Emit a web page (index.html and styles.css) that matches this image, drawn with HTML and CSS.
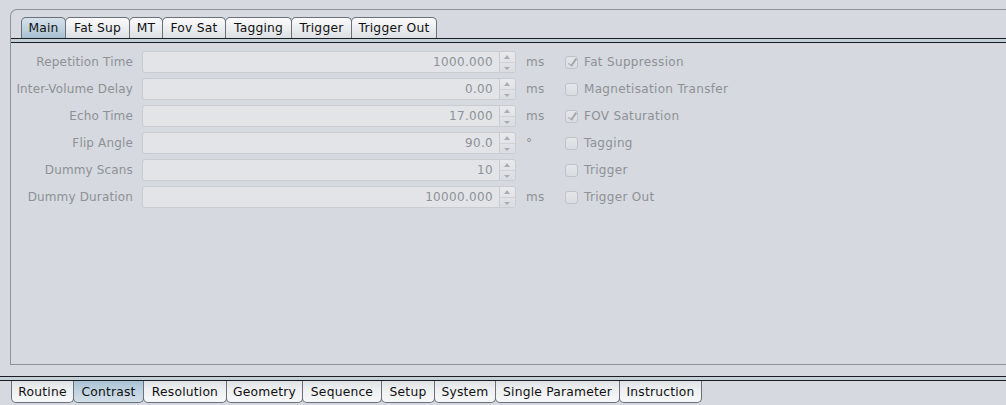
FILE: index.html
```html
<!DOCTYPE html>
<html>
<head>
<meta charset="utf-8">
<link rel="stylesheet" href="styles.css">
</head>
<body>
<div class="app">
  <div class="outer">
    <div class="tabstrip">
      <div class="tab sel w45">Main</div>
      <div class="tab w65">Fat Sup</div>
      <div class="tab w34">MT</div>
      <div class="tab w64">Fov Sat</div>
      <div class="tab w67">Tagging</div>
      <div class="tab w61">Trigger</div>
      <div class="tab w86">Trigger Out</div>
    </div>
    <div class="tabline"></div>
    <div class="content">
      <div class="grid">
        <div class="row">
          <span class="lbl">Repetition Time</span>
          <div class="spin"><div class="val">1000.000</div><div class="btns"><span class="up"></span><span class="dn"></span></div></div>
          <span class="unit">ms</span>
          <label class="cb"><span class="box checked"></span>Fat Suppression</label>
        </div>
        <div class="row">
          <span class="lbl">Inter-Volume Delay</span>
          <div class="spin"><div class="val">0.00</div><div class="btns"><span class="up"></span><span class="dn"></span></div></div>
          <span class="unit">ms</span>
          <label class="cb"><span class="box"></span>Magnetisation Transfer</label>
        </div>
        <div class="row">
          <span class="lbl">Echo Time</span>
          <div class="spin"><div class="val">17.000</div><div class="btns"><span class="up"></span><span class="dn"></span></div></div>
          <span class="unit">ms</span>
          <label class="cb"><span class="box checked"></span>FOV Saturation</label>
        </div>
        <div class="row">
          <span class="lbl">Flip Angle</span>
          <div class="spin"><div class="val">90.0</div><div class="btns"><span class="up"></span><span class="dn"></span></div></div>
          <span class="unit">°</span>
          <label class="cb"><span class="box"></span>Tagging</label>
        </div>
        <div class="row">
          <span class="lbl">Dummy Scans</span>
          <div class="spin"><div class="val">10</div><div class="btns"><span class="up"></span><span class="dn"></span></div></div>
          <span class="unit"></span>
          <label class="cb"><span class="box"></span>Trigger</label>
        </div>
        <div class="row">
          <span class="lbl">Dummy Duration</span>
          <div class="spin"><div class="val">10000.000</div><div class="btns"><span class="up"></span><span class="dn"></span></div></div>
          <span class="unit">ms</span>
          <label class="cb"><span class="box"></span>Trigger Out</label>
        </div>
      </div>
    </div>
  </div>
  <div class="bottom">
    <div class="tabline"></div>
    <div class="btabs">
      <div class="btab w63">Routine</div>
      <div class="btab sel w71">Contrast</div>
      <div class="btab w84">Resolution</div>
      <div class="btab w77">Geometry</div>
      <div class="btab w80">Sequence</div>
      <div class="btab w54">Setup</div>
      <div class="btab w62">System</div>
      <div class="btab w125">Single Parameter</div>
      <div class="btab w83">Instruction</div>
    </div>
  </div>
</div>
</body>
</html>
```
FILE: styles.css
```css
html, body {
  margin: 0;
  padding: 0;
  background: #d6d9df;
  font-family: "DejaVu Sans", "Liberation Sans", sans-serif;
  font-size: 12px;
  letter-spacing: 0.33px;
  color: #000;
}
.app {
  width: 1006px;
  height: 405px;
  overflow: hidden;
  display: flex;
  flex-direction: column;
}
.outer {
  margin: 9px 0 0 10px;
  border-top: 1px solid #909399;
  border-left: 1px solid #909399;
  border-top-left-radius: 7px;
  height: 356px;
  display: flex;
  flex-direction: column;
  box-sizing: border-box;
}
.tabstrip {
  display: flex;
  padding: 7px 0 0 10px;
  height: 28px;
  box-sizing: border-box;
  align-items: flex-end;
}
.tab, .btab {
  box-sizing: border-box;
  text-align: center;
  white-space: nowrap;
  margin-right: -1px;
  border: 1px solid #6b7079;
  font-size: 12.3px;
  letter-spacing: 0.2px;
  color: #111;
}
.tab {
  height: 21px;
  line-height: 21px;
  border-bottom: none;
  border-radius: 5px 5px 0 0;
  background: linear-gradient(#fbfbfc, #e9ebee 60%, #dcdfe3);
}
.tab.sel {
  background: linear-gradient(#d5e1ea, #bcd0de 60%, #a8c0d3);
}
.w34 { width: 34px; }
.w45 { width: 45px; }
.w54 { width: 54px; }
.w61 { width: 61px; }
.w62 { width: 62px; }
.w63 { width: 63px; }
.w64 { width: 64px; }
.w65 { width: 65px; }
.w67 { width: 67px; }
.w71 { width: 71px; }
.w77 { width: 77px; }
.w80 { width: 80px; }
.w83 { width: 83px; }
.w84 { width: 84px; }
.w86 { width: 86px; }
.w125 { width: 125px; }
.tabline {
  height: 5px;
  box-sizing: border-box;
  border-top: 1px solid #1a1d22;
  border-bottom: 1px solid #1a1d22;
  background: #c3d0d8;
}
.content {
  flex: 1;
  border-bottom: 1px solid #8f9298;
  padding-top: 8px;
}
.grid {
  display: flex;
  flex-direction: column;
  gap: 5px;
}
.row {
  display: flex;
  align-items: center;
  height: 22px;
  color: #8e9195;
}
.lbl {
  width: 122px;
  text-align: right;
  margin-right: 9px;
  white-space: nowrap;
  letter-spacing: 0.15px;
}
.spin {
  width: 374px;
  height: 22px;
  display: flex;
  box-sizing: border-box;
  border: 1px solid #c9ccd1;
  border-radius: 3px;
  background: #e2e4e8;
}
.val {
  flex: 1;
  text-align: right;
  line-height: 20px;
  padding-right: 6px;
}
.btns {
  width: 15px;
  display: flex;
  flex-direction: column;
  border-left: 1px solid #c9ccd1;
  background: linear-gradient(#e8eaed, #d9dce1);
  border-radius: 0 3px 3px 0;
}
.btns span {
  flex: 1;
  position: relative;
}
.btns .up { border-bottom: 1px solid #cfd2d6; }
.btns .up::after, .btns .dn::after {
  content: "";
  position: absolute;
  left: 4px;
  top: 3px;
  border-left: 3px solid transparent;
  border-right: 3px solid transparent;
}
.btns .up::after { border-bottom: 4px solid #a9adb3; }
.btns .dn::after { border-top: 3px solid #a9adb3; top: 4px; }
.unit {
  width: 39px;
  margin-left: 10px;
}
.cb {
  display: flex;
  align-items: center;
  gap: 6px;
}
.box {
  width: 13px;
  height: 13px;
  box-sizing: border-box;
  border: 1px solid #c0c3c8;
  border-radius: 3px;
  background: linear-gradient(#e4e6ea, #d9dce0);
  position: relative;
}
.box.checked::after {
  content: "";
  position: absolute;
  left: 4px;
  top: 0px;
  width: 3px;
  height: 8px;
  border-right: 2px solid #a3a7ad;
  border-bottom: 1.5px solid #a3a7ad;
  transform: rotate(35deg);
}
.bottom {
  margin-top: 11px;
}
.btabs {
  display: flex;
  padding-left: 11px;
}
.btab {
  height: 22px;
  line-height: 22px;
  border-top: none;
  border-radius: 0 0 5px 5px;
  background: linear-gradient(#dfe2e6, #edeff1 40%, #f7f8f9);
}
.btab.sel {
  background: linear-gradient(#a9c1d4, #bdd0de 40%, #d3dfe8);
}
```
